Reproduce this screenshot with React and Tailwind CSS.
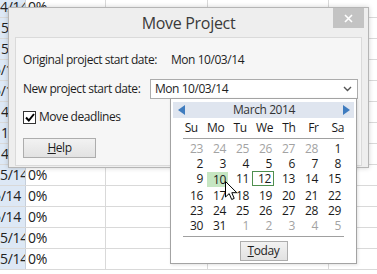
const sheetRows = [
  { a: "4/14", shift: "ml-0", b: "0%" },
  { a: "5/14", shift: "ml-[1px]", b: "" },
  { a: "5/14", shift: "ml-[1px]", b: "" },
  { a: "5/14", shift: "-ml-[7px]", b: "" },
  { a: "5/14", shift: "-ml-[7px]", b: "" },
  { a: "4/14", shift: "ml-[1px]", b: "" },
  { a: "1/14", shift: "ml-[1px]", b: "" },
  { a: "4/14", shift: "ml-[1px]", b: "" },
  { a: "5/14", shift: "ml-0", b: "0%" },
  { a: "5/14", shift: "-ml-[7px]", b: "0%" },
  { a: "5/14", shift: "-ml-[7px]", b: "0%" },
  { a: "5/14", shift: "ml-0", b: "0%" },
  { a: "5/14", shift: "ml-0", b: "0%" },
];

const dayNames = ["Su", "Mo", "Tu", "We", "Th", "Fr", "Sa"];

const weeks = [
  [23, 24, 25, 26, 27, 28, 1],
  [2, 3, 4, 5, 6, 7, 8],
  [9, 10, 11, 12, 13, 14, 15],
  [16, 17, 18, 19, 20, 21, 22],
  [23, 24, 25, 26, 27, 28, 29],
  [30, 31, 1, 2, 3, 4, 5],
];

const Sheet = () => (
  <div className="-mt-[3px] flex flex-col text-[14px] leading-[18px] tracking-[-0.3px] text-[#222]">
    {sheetRows.map((r, i) => (
      <div key={i} className="flex h-[21px] shrink-0 border-b border-[#d9d9d9]">
        <div className="w-[26px] shrink-0 overflow-hidden whitespace-nowrap bg-[#dde8f5] border-r border-[#c6cfdb] flex items-center">
          <span className={r.shift}>{r.a}</span>
        </div>
        <div className="w-[80px] shrink-0 border-r border-[#d9d9d9] flex items-center pl-[2px]">
          {r.b}
        </div>
        <div className="w-[102px] shrink-0 border-r border-[#d9d9d9]" />
        <div className="w-[121px] shrink-0 border-r border-[#d9d9d9]" />
        <div className="flex-1" />
      </div>
    ))}
  </div>
);

const Dialog = () => (
  <div className="absolute left-[8px] top-[7px] w-[361px] h-[161px] bg-[#eeeeee] border border-[#b5b5b5] shadow-[0_0_5px_rgba(0,0,0,0.18)] flex flex-col">
    <div className="relative h-[29px] shrink-0 flex items-center justify-center">
      <span className="text-[16px] tracking-[-0.3px] text-[#3a3a3a]">Move Project</span>
      <div className="absolute right-[4px] top-0 w-[31px] h-[20px] bg-[#c3c3c3] flex items-center justify-center">
        <svg width="9" height="9" viewBox="0 0 9 9">
          <path d="M1 1L8 8M8 1L1 8" stroke="#fff" strokeWidth="1.6" />
        </svg>
      </div>
    </div>

    <div className="mx-[6px] mb-[1px] flex-1 bg-[#f6f6f6] border border-[#dadada] pl-[7px] pt-[12px] flex flex-col text-[12px] leading-[16px] tracking-[-0.45px] text-[#1e1e1e] whitespace-nowrap">
      <div className="flex h-[20px] items-center">
        <span className="w-[148px] shrink-0">Original project start date:</span>
        <span>Mon 10/03/14</span>
      </div>

      <div className="mt-[9px] flex h-[20px] items-center">
        <span className="w-[127px] shrink-0">New project start date:</span>
        <div className="w-[208px] h-[20px] bg-white border border-[#acacac] flex items-center justify-between pl-[4px] pr-[5px]">
          <span>Mon 10/03/14</span>
          <svg width="9" height="6" viewBox="0 0 9 6">
            <path d="M1 1L4.5 4.5L8 1" fill="none" stroke="#555" strokeWidth="1.4" />
          </svg>
        </div>
      </div>

      <div className="mt-[8px] flex h-[20px] items-center">
        <div className="w-[13px] h-[13px] bg-white border border-[#333] flex items-center justify-center">
          <svg width="10" height="9" viewBox="0 0 10 9">
            <path d="M1 4.5L3.8 7.5L9 1" fill="none" stroke="#000" strokeWidth="2" />
          </svg>
        </div>
        <span className="ml-[3px]">Move deadlines</span>
      </div>

      <div className="mt-[11px]">
        <button className="w-[73px] h-[20px] border border-[#adadad] bg-gradient-to-b from-[#f2f2f2] to-[#e2e2e2] text-[12px] text-[#1e1e1e] flex items-center justify-center">
          <span><span className="underline">H</span>elp</span>
        </button>
      </div>
    </div>
  </div>
);

const Calendar = () => (
  <div className="absolute left-[170px] top-[98px] w-[187px] h-[166px] bg-white border border-[#a3a3a3] shadow-[1px_1px_3px_rgba(0,0,0,0.12)] px-[2px] pt-[3px] text-[12px] leading-[14px] tracking-[-0.4px] text-[#1a1a1a] whitespace-nowrap">
    <div className="h-[16px] bg-[#dfe5ef] flex items-center justify-between pl-[5px] pr-[4px]">
      <svg width="7" height="10" viewBox="0 0 7 10">
        <path d="M7 0L0 5L7 10Z" fill="#3f7cbf" />
      </svg>
      <span className="text-[#333]">March 2014</span>
      <svg width="7" height="10" viewBox="0 0 7 10">
        <path d="M0 0L7 5L0 10Z" fill="#3f7cbf" />
      </svg>
    </div>

    <div className="ml-[6px] mt-[2px] w-[171px] h-[16px] grid grid-cols-7">
      {dayNames.map((d) => (
        <span key={d} className="flex items-center justify-center">{d}</span>
      ))}
    </div>
    <div className="ml-[10px] mt-[2px] w-[161px] h-[1px] bg-[#a0a0a0]" />

    <div className="ml-[9px] mt-[2px] w-[161px] grid grid-cols-7">
      {weeks.map((w, wi) =>
        w.map((d, di) => {
          const muted = (wi === 0 && d > 7) || (wi === 5 && d < 7);
          const selected = wi === 2 && di === 1;
          const today = wi === 2 && di === 3;
          return (
            <div
              key={`${wi}-${di}`}
              className={`h-[15px] flex items-center justify-end pr-[2px] ${muted ? "text-[#a3a3a3]" : ""} ${selected ? "bg-[#c6e6c2] ml-[2px] my-[1px] h-[13px]" : ""} ${today ? "border border-[#4f8f4f] ml-[1px]" : ""}`}
            >
              {d}
            </div>
          );
        })
      )}
    </div>
    <div className="ml-[10px] mt-[3px] w-[161px] h-[1px] bg-[#a0a0a0]" />

    <div className="mt-[4px] flex justify-center">
      <button className="w-[48px] h-[20px] border border-[#adadad] bg-gradient-to-b from-[#f2f2f2] to-[#e2e2e2] text-[12px] text-[#1e1e1e] flex items-center justify-center">
        <span><span className="underline">T</span>oday</span>
      </button>
    </div>
  </div>
);

const Cursor = () => (
  <svg className="absolute left-[225px] top-[181px]" width="13" height="20" viewBox="0 0 13 20">
    <path
      d="M0.5 0.5L0.5 16L4.2 12.6L6.7 18.5L9.2 17.4L6.8 11.7L11.8 11.7Z"
      fill="#fff"
      stroke="#000"
      strokeWidth="1"
      strokeLinejoin="round"
    />
  </svg>
);

export default function App() {
  return (
    <div className="relative w-[377px] h-[274px] overflow-hidden bg-white font-['Open_Sans',sans-serif]">
      <Sheet />
      <Dialog />
      <Calendar />
      <Cursor />
    </div>
  );
}
